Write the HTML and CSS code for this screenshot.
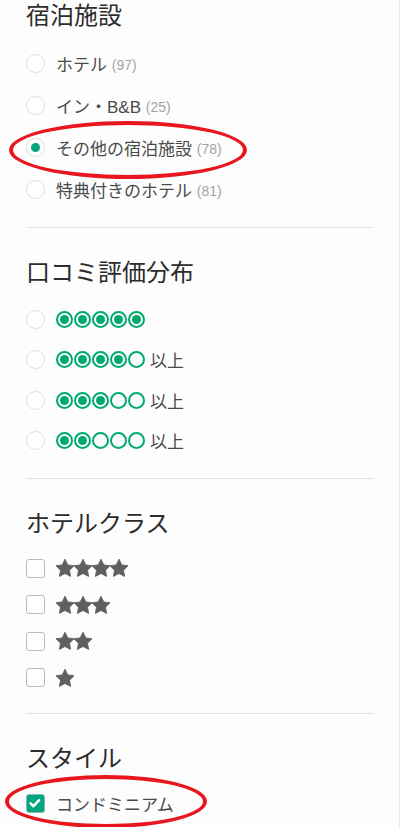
FILE: index.html
```html
<!DOCTYPE html>
<html lang="ja">
<head>
  <meta charset="UTF-8">
  <meta name="viewport" content="width=device-width, initial-scale=1.0">
  <title>絞り込み</title>
  <link rel="stylesheet" href="styles.css">
</head>
<body>
  <div id="filters">
    <div class="section">
      <h3>宿泊施設</h3>
      <div class="opt-list">
        <label class="opt"><span class="radio"></span>ホテル <span class="count">(97)</span></label>
        <label class="opt"><span class="radio"></span>イン・B&amp;B <span class="count">(25)</span></label>
        <label class="opt marked"><span class="radio on"></span>その他の宿泊施設 <span class="count">(78)</span><span class="ring ring-a"></span></label>
        <label class="opt"><span class="radio"></span>特典付きのホテル <span class="count">(81)</span></label>
      </div>
    </div>

    <div class="section">
      <h3>口コミ評価分布</h3>
      <div class="opt-list">
        <label class="opt rating"><span class="radio"></span><span class="bubbles"><i class="full"></i><i class="full"></i><i class="full"></i><i class="full"></i><i class="full"></i></span></label>
        <label class="opt rating"><span class="radio"></span><span class="bubbles"><i class="full"></i><i class="full"></i><i class="full"></i><i class="full"></i><i></i></span>以上</label>
        <label class="opt rating"><span class="radio"></span><span class="bubbles"><i class="full"></i><i class="full"></i><i class="full"></i><i></i><i></i></span>以上</label>
        <label class="opt rating"><span class="radio"></span><span class="bubbles"><i class="full"></i><i class="full"></i><i></i><i></i><i></i></span>以上</label>
      </div>
    </div>

    <div class="section">
      <h3>ホテルクラス</h3>
      <div class="opt-list">
        <label class="opt check"><span class="box"></span><span class="stars" data-n="4"></span></label>
        <label class="opt check"><span class="box"></span><span class="stars" data-n="3"></span></label>
        <label class="opt check"><span class="box"></span><span class="stars" data-n="2"></span></label>
        <label class="opt check"><span class="box"></span><span class="stars" data-n="1"></span></label>
      </div>
    </div>

    <div class="section last">
      <h3>スタイル</h3>
      <div class="opt-list">
        <label class="opt check marked"><span class="box on"><svg viewBox="0 0 16 16" width="16" height="16"><path d="M3.6 8.4l2.9 2.8 5.6-6" fill="none" stroke="#fff" stroke-width="2.6" stroke-linecap="round" stroke-linejoin="round"/></svg></span>コンドミニアム<span class="ring ring-b"></span></label>
      </div>
    </div>
  </div>

  <script>
    // star rows for the hotel class filter
    const star = '<svg viewBox="1.6 1.6 20.8 20.8" width="18" height="18"><path d="M12 1.8l3.2 6.6 7.2 1-5.2 5.1 1.3 7.2L12 18.3l-6.5 3.4 1.3-7.2-5.2-5.1 7.2-1z" fill="#5f5f5f" stroke="#5f5f5f" stroke-width="1" stroke-linejoin="round"/></svg>';
    document.querySelectorAll('.stars').forEach(el => {
      el.innerHTML = star.repeat(Number(el.dataset.n));
    });
  </script>
</body>
</html>
```

FILE: styles.css
```css
html, body {
  margin: 0;
  height: 100%;
  overflow: hidden;
  background: #fff;
}
body {
  font-family: "Liberation Sans", "Noto Sans CJK JP", sans-serif;
  color: #4a4a4a;
}
#filters {
  width: 400px;
  min-height: 100%;
  border-right: 1px solid #e6e6e6;
  box-sizing: border-box;
  background: #fdfdfd;
}
.section {
  margin: 0 25px 0 26px;
  padding: 29px 0 17px;
  border-bottom: 1px solid #e2e2e2;
}
.section:first-child {
  padding-top: 0;
}
.section.last {
  border-bottom: none;
  padding-bottom: 0;
}
.section h3 {
  margin: 0;
  font-size: 24px;
  line-height: 32px;
  font-weight: normal;
  color: #2c2c2c;
}
.opt-list {
  margin-top: 10px;
}
.opt {
  position: relative;
  display: flex;
  align-items: center;
  height: 42px;
  font-size: 17px;
  color: #4a4a4a;
  white-space: pre;
}
.opt.rating {
  height: 40.5px;
}
.opt.check {
  height: 36.5px;
}
.count {
  font-size: 14px;
  color: #a3a3a3;
  margin-top: 3px;
}
.radio {
  width: 19px;
  height: 19px;
  box-sizing: border-box;
  border: 1px solid #dedede;
  border-radius: 50%;
  margin-right: 11px;
  flex-shrink: 0;
  display: flex;
  align-items: center;
  justify-content: center;
  background: #fff;
}
.radio.on {
  border-color: #cfe2dc;
}
.radio.on::after {
  content: "";
  width: 9px;
  height: 9px;
  border-radius: 50%;
  background: #00a680;
}
.box {
  width: 19px;
  height: 19px;
  box-sizing: border-box;
  border: 1.5px solid #bcbcbc;
  border-radius: 3px;
  margin-right: 11px;
  flex-shrink: 0;
  background: #fff;
}
.box.on {
  background: #00a680;
  border-color: #8fb8ad;
  display: flex;
}
.box.on svg {
  display: block;
}
.bubbles {
  display: flex;
  gap: 1px;
  margin-right: 5px;
}
.bubbles i {
  width: 17px;
  height: 17px;
  box-sizing: border-box;
  border: 2px solid #00aa6c;
  border-radius: 50%;
  display: flex;
  align-items: center;
  justify-content: center;
}
.bubbles i.full::after {
  content: "";
  width: 9px;
  height: 9px;
  border-radius: 50%;
  background: #00aa6c;
}
.stars {
  display: flex;
}
.stars svg {
  display: block;
}
.ring {
  position: absolute;
  box-sizing: border-box;
  border: 4.5px solid #e8161f;
  border-radius: 50%;
  pointer-events: none;
}
.ring-a {
  left: -17px;
  top: -5px;
  width: 238px;
  height: 58px;
}
.ring-b {
  left: -21px;
  top: -10px;
  width: 202px;
  height: 53px;
}
```
